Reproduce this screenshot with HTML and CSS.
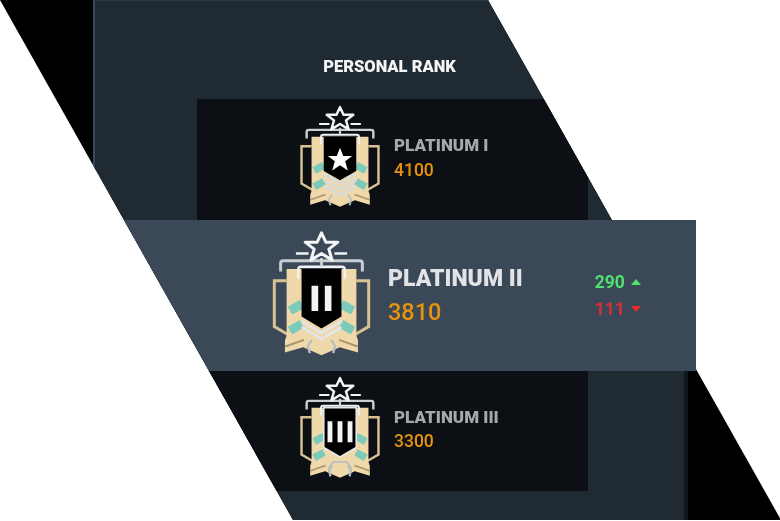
FILE: index.html
```html
<!DOCTYPE html>
<html lang="en">
<head>
<meta charset="utf-8">
<title>Personal rank</title>
<link rel="stylesheet" href="styles.css">
</head>
<body>
<svg class="defs" width="0" height="0" aria-hidden="true">
  <defs>
    <g id="badge-base">
      <path d="M80 180H43V318L84 342M290 180H327V318L286 342" fill="none" stroke="#d9c193" stroke-width="9"/>
      <path d="M80 145H290V345L295 360V396L240 380L185 404L130 380L75 396V360L80 345Z" fill="#efd8a9"/>
      <path d="M76 378L132 358M294 378L238 358" stroke="#a8946f" stroke-width="6" fill="none"/>
      <path d="M90 270L126 250M90 330L126 310M280 270L244 250M280 330L244 310" stroke="#7ccab9" stroke-width="27" fill="none"/>
      <path d="M62 152V128Q62 120 70 120H300Q308 120 308 128V152" fill="none" stroke="#c9ced3" stroke-width="9"/>
      <path d="M115 174V146Q115 138 123 138H247Q255 138 255 146V174" fill="none" stroke="#f1f2f3" stroke-width="7"/>
      <path d="M108 98H146M224 98H262" stroke="#f1f2f3" stroke-width="7"/>
      <path d="M185 112V138" stroke="#d5d8db" stroke-width="8"/>
      <path d="M185 36L198 64L234 64L207 85L217 118L185 98L153 118L163 85L136 64L172 64Z" fill="none" stroke="#f4f5f6" stroke-width="9" stroke-linejoin="round"/>
      <path d="M150 398L144 378L156 358M220 398L226 378L214 358" fill="none" stroke="#b9bec3" stroke-width="7"/>
    </g>
    <g id="star-small">
      <path d="M185 186L197 216L230 216L204 236L214 270L185 250L156 270L166 236L140 216L173 216Z" fill="#fff"/>
    </g>
  </defs>
</svg>

<main class="stage">
  <div class="panel">
    <h1 class="heading">PERSONAL RANK</h1>

    <section class="card">
      <svg class="badge badge-small" viewBox="30 25 310 390" role="img" aria-label="Platinum I badge">
        <use href="#badge-base"/>
        <path d="M125 145H245V272L185 306L125 272Z" fill="#000"/>
        <path d="M125 282L185 316L245 282M125 304L185 338L245 304M125 326L185 360L245 326" fill="none" stroke="#d8dadc" stroke-width="10"/>
        <use href="#star-small"/>
      </svg>
      <div class="info">
        <div class="rank">PLATINUM I</div>
        <div class="score">4100</div>
      </div>
    </section>

    <section class="card card-lower">
      <svg class="badge badge-small" viewBox="30 25 310 390" role="img" aria-label="Platinum III badge">
        <use href="#badge-base"/>
        <path d="M125 145H245V292L185 327L125 292Z" fill="#000" stroke="#e6e8ea" stroke-width="6"/>
        <path d="M139 195h18v78h-18zM176 195h18v78h-18zM213 195h18v78h-18z" fill="#f2f3f4"/>
        <path d="M150 398L144 368L160 345H210L226 368L220 398" fill="none" stroke="#b9bec3" stroke-width="7"/>
      </svg>
      <div class="info">
        <div class="rank">PLATINUM III</div>
        <div class="score">3300</div>
      </div>
    </section>
  </div>
</main>

<section class="band">
  <svg class="badge badge-large" viewBox="30 25 310 390" role="img" aria-label="Platinum II badge">
    <use href="#badge-base"/>
    <path d="M125 145H245V288L185 324L125 288Z" fill="#000"/>
    <path d="M125 302L185 337L245 302M125 320L185 355L245 320" fill="none" stroke="#e3e5e7" stroke-width="8"/>
    <path d="M155 195h20v76h-20zM195 195h20v76h-20z" fill="#f2f3f4"/>
  </svg>
  <div class="info info-large">
    <div class="rank rank-large">PLATINUM II</div>
    <div class="score score-large">3810</div>
  </div>
  <div class="deltas">
    <div class="delta delta-up">290<span class="arrow arrow-up"></span></div>
    <div class="delta delta-down">111<span class="arrow arrow-down"></span></div>
  </div>
</section>
</body>
</html>
```

FILE: styles.css
```css
* { box-sizing: border-box; }
html, body { margin: 0; padding: 0; background: #fff; }
body {
  width: 780px;
  height: 521px;
  overflow: hidden;
  position: relative;
  font-family: Roboto, "Liberation Sans", sans-serif;
}
.defs { position: absolute; }

.stage {
  width: 781px;
  height: 520px;
  background: #000;
  clip-path: polygon(0 0, 488px 0, 781px 520px, 293px 520px);
  padding-left: 93px;
}
.panel {
  width: 595px;
  height: 520px;
  background: #1f2a32;
  border-left: 2px solid #3a4a5c;
  border-right: 4px solid #10181d;
  border-top: 1px solid #2c3945;
  padding-left: 102px;
  padding-right: 96px;
  display: flex;
  flex-direction: column;
}
.heading {
  margin: 57px -96px 0 -102px;
  height: 41px;
  font-size: 16.5px;
  line-height: 18px;
  font-weight: 900;
  color: #f4f5f6;
  text-align: center;
  filter: blur(0.4px);
}
.card {
  flex: none;
  height: 121px;
  background: #0c1014;
  display: flex;
  align-items: flex-start;
  padding: 5px 0 0 101px;
}
.card-lower {
  margin-top: 151px;
  height: 120px;
  padding-top: 4px;
}
.badge { display: block; flex: none; filter: blur(0.5px); }
.badge-small { width: 84px; height: 106px; }
.badge-large { width: 103px; height: 130px; }

.info { margin-left: 12px; padding-top: 31px; filter: blur(0.4px); }
.card-lower .info { padding-top: 32px; }
.rank {
  font-size: 17px;
  line-height: 20px;
  font-weight: 900;
  color: #a6a9ac;
}
.score {
  margin-top: 5px;
  font-size: 17.5px;
  line-height: 20px;
  font-weight: 500;
  color: #e8920e;
}
.card-lower .score { margin-top: 4px; }

.band {
  position: absolute;
  left: 0;
  top: 220px;
  width: 696px;
  height: 151px;
  background: #3a4858;
  clip-path: polygon(124px 0, 696px 0, 696px 151px, 209px 151px);
  display: flex;
  align-items: flex-start;
  padding: 9px 0 0 270px;
}
.info-large { margin-left: 15px; padding-top: 36px; }
.rank-large { font-size: 23px; line-height: 27px; color: #e1e3e6; }
.score-large { margin-top: 6px; font-size: 23.5px; line-height: 28px; }

.deltas { margin-left: 72px; padding-top: 43px; filter: blur(0.4px); }
.delta {
  display: flex;
  align-items: center;
  justify-content: flex-end;
  height: 20px;
  margin-bottom: 7px;
  font-size: 17.5px;
  font-weight: 700;
}
.delta-up { color: #4fe070; }
.delta-down { color: #d92f33; }
.arrow {
  width: 0;
  height: 0;
  margin-left: 6px;
  border-left: 5.5px solid transparent;
  border-right: 5.5px solid transparent;
}
.arrow-up { border-bottom: 6px solid #4fe070; }
.arrow-down { border-top: 6px solid #ee2c2c; }
```
